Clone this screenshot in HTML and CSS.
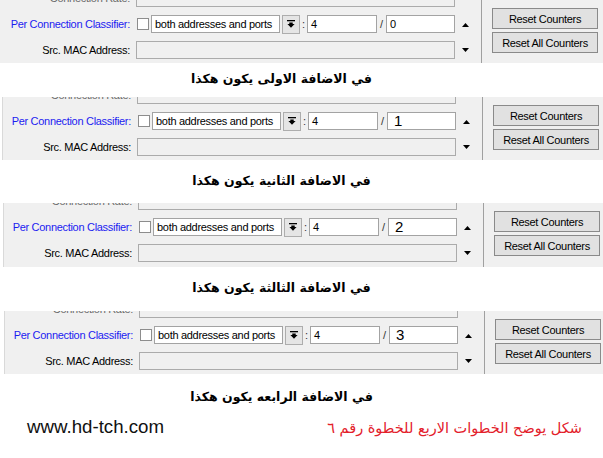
FILE: index.html
```html
<!DOCTYPE html>
<html lang="ar">
<head>
<meta charset="utf-8">
<title>Per Connection Classifier</title>
<link rel="stylesheet" href="styles.css">
</head>
<body>
<div class="page">

  <div class="panel p1">
    <div class="form">
      <div class="row"><span class="lbl dim">Connection Rate:</span><div class="field wide"></div></div>
      <div class="row">
        <span class="lbl blue">Per Connection Classifier:</span>
        <span class="chk"></span>
        <div class="select">both addresses and ports</div>
        <div class="ddbtn"><svg width="8" height="8" viewBox="0 0 8 8"><rect x="0" y="0" width="8" height="1.3" fill="#000"/><polygon points="2.3,2.6 5.7,2.6 5.7,4 7.6,4 4,7.8 0.4,4 2.3,4" fill="#000"/></svg></div>
        <span class="colon">:</span>
        <div class="num">4</div>
        <span class="slash">/</span>
        <div class="num last">0</div>
      </div>
      <div class="row"><span class="lbl">Src. MAC Address:</span><div class="field wide"></div></div>
    </div>
    <div class="arrows">
      <svg width="7" height="4" viewBox="0 0 7 4"><polygon points="0,4 7,4 3.5,0" fill="#000"/></svg>
      <svg width="7" height="4" viewBox="0 0 7 4"><polygon points="0,0 7,0 3.5,4" fill="#000"/></svg>
    </div>
    <div class="vsep"></div>
    <div class="buttons">
      <button class="btn">Reset Counters</button>
      <button class="btn">Reset All Counters</button>
    </div>
  </div>
  <div class="cap c1" dir="rtl">في الاضافة الاولى يكون هكذا</div>

  <div class="panel p2">
    <div class="form">
      <div class="row"><span class="lbl dim">Connection Rate:</span><div class="field wide"></div></div>
      <div class="row">
        <span class="lbl blue">Per Connection Classifier:</span>
        <span class="chk"></span>
        <div class="select">both addresses and ports</div>
        <div class="ddbtn"><svg width="8" height="8" viewBox="0 0 8 8"><rect x="0" y="0" width="8" height="1.3" fill="#000"/><polygon points="2.3,2.6 5.7,2.6 5.7,4 7.6,4 4,7.8 0.4,4 2.3,4" fill="#000"/></svg></div>
        <span class="colon">:</span>
        <div class="num">4</div>
        <span class="slash">/</span>
        <div class="num last big">1</div>
      </div>
      <div class="row"><span class="lbl">Src. MAC Address:</span><div class="field wide"></div></div>
    </div>
    <div class="arrows">
      <svg width="7" height="4" viewBox="0 0 7 4"><polygon points="0,4 7,4 3.5,0" fill="#000"/></svg>
      <svg width="7" height="4" viewBox="0 0 7 4"><polygon points="0,0 7,0 3.5,4" fill="#000"/></svg>
    </div>
    <div class="vsep"></div>
    <div class="buttons">
      <button class="btn">Reset Counters</button>
      <button class="btn">Reset All Counters</button>
    </div>
  </div>
  <div class="cap c2" dir="rtl">في الاضافة الثانية يكون هكذا</div>

  <div class="panel p3">
    <div class="form">
      <div class="row"><span class="lbl dim">Connection Rate:</span><div class="field wide"></div></div>
      <div class="row">
        <span class="lbl blue">Per Connection Classifier:</span>
        <span class="chk"></span>
        <div class="select">both addresses and ports</div>
        <div class="ddbtn"><svg width="8" height="8" viewBox="0 0 8 8"><rect x="0" y="0" width="8" height="1.3" fill="#000"/><polygon points="2.3,2.6 5.7,2.6 5.7,4 7.6,4 4,7.8 0.4,4 2.3,4" fill="#000"/></svg></div>
        <span class="colon">:</span>
        <div class="num">4</div>
        <span class="slash">/</span>
        <div class="num last big">2</div>
      </div>
      <div class="row"><span class="lbl">Src. MAC Address:</span><div class="field wide"></div></div>
    </div>
    <div class="arrows">
      <svg width="7" height="4" viewBox="0 0 7 4"><polygon points="0,4 7,4 3.5,0" fill="#000"/></svg>
      <svg width="7" height="4" viewBox="0 0 7 4"><polygon points="0,0 7,0 3.5,4" fill="#000"/></svg>
    </div>
    <div class="vsep"></div>
    <div class="buttons">
      <button class="btn">Reset Counters</button>
      <button class="btn">Reset All Counters</button>
    </div>
  </div>
  <div class="cap c3" dir="rtl">في الاضافة الثالثة يكون هكذا</div>

  <div class="panel p4">
    <div class="form">
      <div class="row"><span class="lbl dim">Connection Rate:</span><div class="field wide"></div></div>
      <div class="row">
        <span class="lbl blue">Per Connection Classifier:</span>
        <span class="chk"></span>
        <div class="select">both addresses and ports</div>
        <div class="ddbtn"><svg width="8" height="8" viewBox="0 0 8 8"><rect x="0" y="0" width="8" height="1.3" fill="#000"/><polygon points="2.3,2.6 5.7,2.6 5.7,4 7.6,4 4,7.8 0.4,4 2.3,4" fill="#000"/></svg></div>
        <span class="colon">:</span>
        <div class="num">4</div>
        <span class="slash">/</span>
        <div class="num last big">3</div>
      </div>
      <div class="row"><span class="lbl">Src. MAC Address:</span><div class="field wide"></div></div>
    </div>
    <div class="arrows">
      <svg width="7" height="4" viewBox="0 0 7 4"><polygon points="0,4 7,4 3.5,0" fill="#000"/></svg>
      <svg width="7" height="4" viewBox="0 0 7 4"><polygon points="0,0 7,0 3.5,4" fill="#000"/></svg>
    </div>
    <div class="vsep"></div>
    <div class="buttons">
      <button class="btn">Reset Counters</button>
      <button class="btn">Reset All Counters</button>
    </div>
  </div>
  <div class="cap c4" dir="rtl">في الاضافة الرابعه يكون هكذا</div>

  <div class="footer">
    <span class="url">www.hd-tch.com</span>
    <span class="note" dir="rtl">شكل يوضح الخطوات الاربع للخطوة رقم ٦</span>
  </div>
</div>
</body>
</html>
```

FILE: styles.css
```css
body {
  margin: 0;
  background: #ffffff;
}

.page {
  width: 603px;
}

.panel {
  display: flex;
  align-items: flex-start;
  height: 63px;
  overflow: hidden;
  background: #f0f0f0;
  font-family: "Liberation Sans", Arial, sans-serif;
  font-size: 11px;
  letter-spacing: -0.3px;
  color: #000;
}

.p2 { margin-left: 2px; border-left: 1px solid #d9d9d9; }
.p3 { margin-left: 3px; border-left: 1px solid #d9d9d9; height: 64px; }
.p4 { margin-left: 4px; border-left: 1px solid #d9d9d9; }

.form {
  display: flex;
  flex-direction: column;
  gap: 8px;
  margin-top: -11px;
  flex: none;
}

.row {
  display: flex;
  align-items: center;
  height: 18px;
}

.lbl {
  flex: none;
  width: 130px;
  margin-right: 6px;
  text-align: right;
  white-space: nowrap;
}

.p2 .lbl, .p3 .lbl, .p4 .lbl { width: 128px; }

.dim { color: #6a6a6a; }
.blue { color: #1c1cf0; }

.field {
  box-sizing: border-box;
  height: 18px;
  border: 1px solid #ababab;
  background: #f0f0f0;
}

.wide { width: 319px; }

.chk {
  flex: none;
  box-sizing: border-box;
  width: 12px;
  height: 12px;
  margin: 0 2px 0 1px;
  border: 1px solid #8d8d8d;
  background: #fff;
}

.select {
  flex: none;
  box-sizing: border-box;
  width: 129px;
  height: 18px;
  padding-left: 3px;
  line-height: 16px;
  border: 1px solid #a3a3a3;
  background: #fff;
  white-space: nowrap;
  overflow: hidden;
}

.ddbtn {
  flex: none;
  box-sizing: border-box;
  width: 18px;
  height: 19px;
  margin-left: 2px;
  border: 1px solid #adadad;
  background: #e5e5e5;
  display: flex;
  align-items: center;
  justify-content: center;
}

.ddbtn svg { display: block; }

.colon {
  flex: none;
  width: 7px;
  text-align: center;
  color: #333;
}

.slash {
  flex: none;
  width: 9px;
  text-align: center;
  color: #333;
}

.num {
  flex: none;
  box-sizing: border-box;
  width: 70px;
  height: 18px;
  padding-left: 3px;
  line-height: 16px;
  border: 1px solid #a3a3a3;
  background: #fff;
}

.num.last { width: 69px; }

.num.big {
  font-size: 15px;
  padding-left: 6px;
  letter-spacing: 0;
}

.arrows {
  flex: none;
  display: flex;
  flex-direction: column;
  gap: 21px;
  width: 7px;
  margin-left: 7px;
  padding-top: 23px;
}

.arrows svg { display: block; }

.vsep {
  flex: none;
  align-self: stretch;
  width: 1px;
  margin-left: 12px;
  background: #a0a0a0;
}

.buttons {
  flex: none;
  display: flex;
  flex-direction: column;
  gap: 3px;
  margin-left: 10px;
  padding-top: 8px;
}

.btn {
  box-sizing: border-box;
  width: 106px;
  height: 21px;
  padding: 0;
  border: 1px solid #8a8a8a;
  background: #e1e1e1;
  font-family: "Liberation Sans", Arial, sans-serif;
  font-size: 11px;
  letter-spacing: -0.3px;
  color: #000;
}

.cap {
  box-sizing: border-box;
  padding-right: 40px;
  text-align: center;
  font-family: "DejaVu Sans", sans-serif;
  font-weight: bold;
  font-size: 12.5px;
  line-height: 20px;
  color: #000;
}

.c1 { height: 34px; padding-top: 6px; }
.c2 { height: 43px; padding-top: 11px; }
.c3 { height: 44px; padding-top: 11px; }
.c4 { height: 36px; padding-top: 13px; }

.footer {
  display: flex;
  justify-content: space-between;
  align-items: baseline;
  padding: 6px 21px 0 27px;
}

.url {
  font-family: "Liberation Sans", Arial, sans-serif;
  font-size: 18.7px;
  color: #111;
}

.note {
  font-family: "DejaVu Sans", sans-serif;
  font-size: 14.5px;
  color: #e3202a;
}
```
